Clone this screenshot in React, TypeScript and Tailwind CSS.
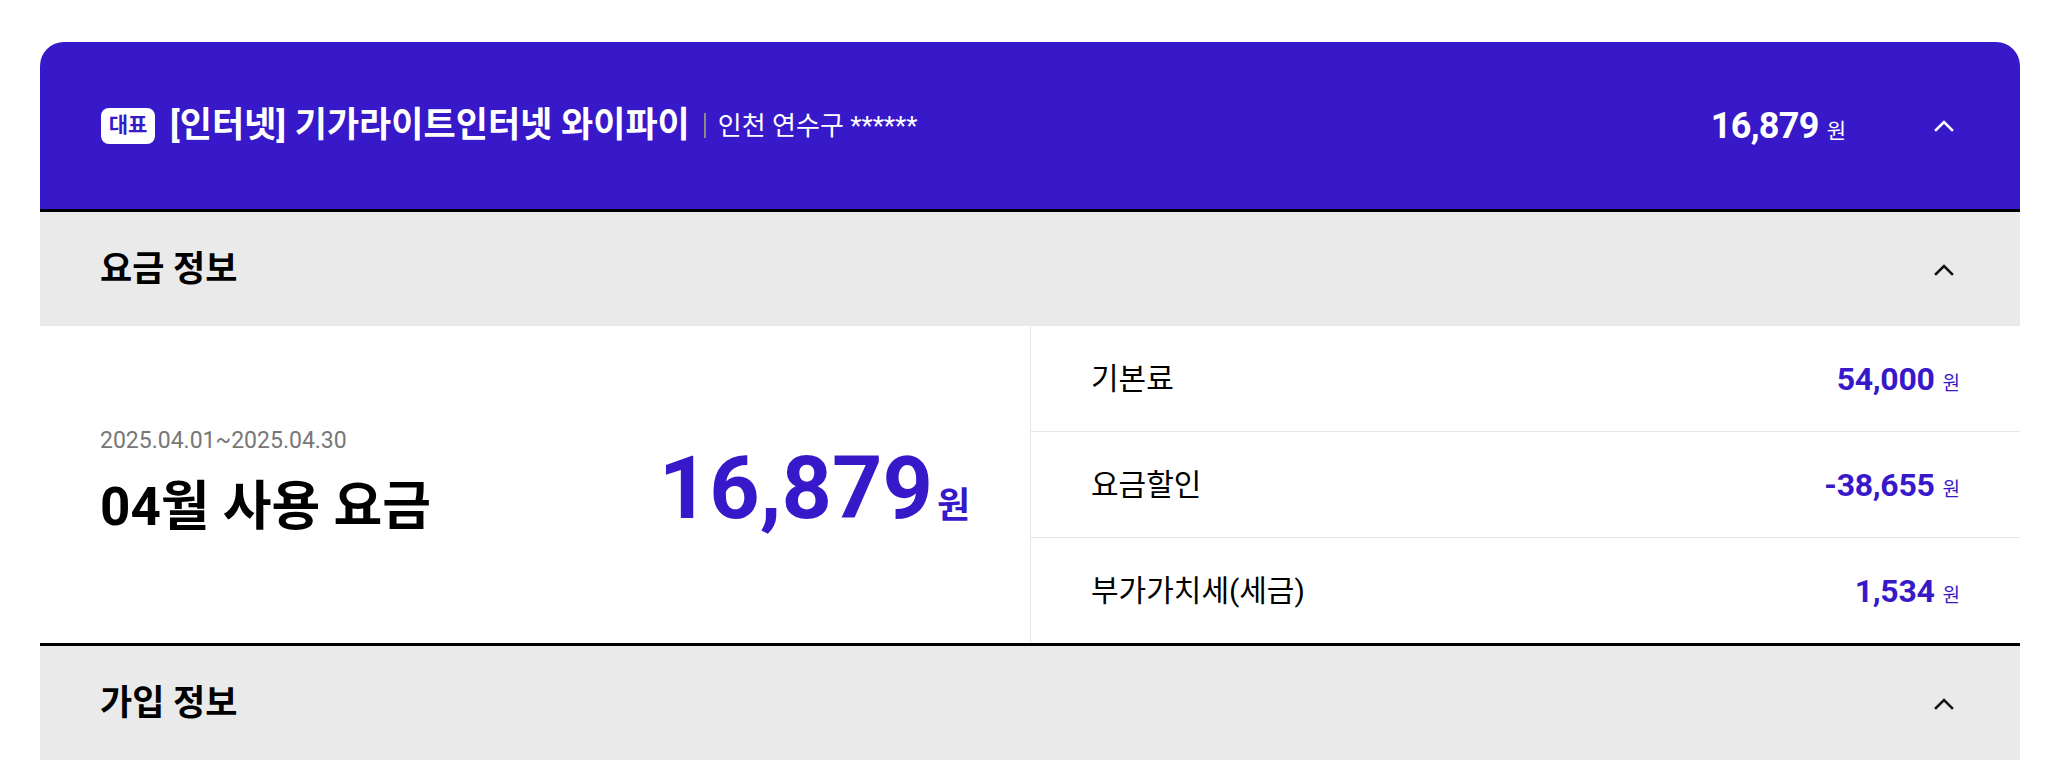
import React from 'react';

const FONT = 'font-[Roboto,"Noto_Sans_CJK_KR",sans-serif]';

const ChevronUp = ({ color }: { color: string }) => (
  <svg width="20" height="13" viewBox="0 0 20 13" fill="none">
    <polyline points="2,11 10,3 18,11" stroke={color} strokeWidth="2.6" strokeLinecap="square" />
  </svg>
);

const rows = [
  { label: '기본료', value: '54,000' },
  { label: '요금할인', value: '-38,655' },
  { label: '부가가치세(세금)', value: '1,534' },
];

const SectionHead = ({ title }: { title: string }) => (
  <div className="h-[114px] bg-[#eaeaea] pl-[60px] pr-[66px] flex items-center justify-between">
    <h3 className="text-[35px] font-bold text-black leading-none">{title}</h3>
    <ChevronUp color="#111" />
  </div>
);

export default function App() {
  return (
    <div className={`${FONT} bg-white min-h-[763px] pt-[42px] pl-[40px]`}>
      <div className="w-[1980px]">
        {/* 상단 요약 */}
        <div className="h-[170px] rounded-t-[24px] bg-[#3719c9] border-b-[3px] border-black pl-[61px] pr-[66px] flex items-center justify-between">
          <div className="flex items-center text-white">
            <span className="w-[54px] h-[36px] rounded-[8px] bg-white text-[#3719c9] text-[21px] font-bold flex items-center justify-center">
              대표
            </span>
            <span className="ml-[15px] text-[35px] font-bold leading-none">
              [인터넷] 기가라이트인터넷 와이파이
            </span>
            <span className="ml-[14px] w-[2px] h-[25px] bg-[#8a8a80]" />
            <span className="ml-[12px] text-[26px] leading-none">인천 연수구 ******</span>
          </div>
          <div className="flex items-center gap-[88px] text-white">
            <div className="flex items-baseline gap-[8px]">
              <span className="text-[36px] font-bold leading-none tracking-[-0.7px]">16,879</span>
              <span className="text-[21px] leading-none">원</span>
            </div>
            <ChevronUp color="#fff" />
          </div>
        </div>

        <SectionHead title="요금 정보" />

        <div className="grid grid-cols-2 h-[320px] border-b-[3px] border-black">
          <div className="px-[60px] flex items-center justify-between">
            <div className="-mt-[8px]">
              <p className="text-[23px] text-[#777] leading-[28px]">2025.04.01~2025.04.30</p>
              <p className="mt-[26px] text-[53px] font-bold text-black leading-none">04월 사용 요금</p>
            </div>
            <div className="flex items-baseline gap-[4px] text-[#3719c9] font-bold mt-[6px]">
              <span className="text-[88px] leading-none">16,879</span>
              <span className="text-[36px] leading-none">원</span>
            </div>
          </div>
          <div className="border-l border-[#e6e6e6] flex flex-col">
            {rows.map((row, i) => (
              <div
                key={row.label}
                className={`flex-1 px-[60px] flex items-center justify-between ${i < rows.length - 1 ? 'border-b border-[#e6e6e6]' : ''}`}
              >
                <span className="text-[30px] text-black leading-none">{row.label}</span>
                <div className="flex items-baseline gap-[8px] text-[#3719c9]">
                  <span className="text-[32px] font-bold leading-none tracking-[-0.3px]">{row.value}</span>
                  <span className="text-[19px] leading-none">원</span>
                </div>
              </div>
            ))}
          </div>
        </div>

        <SectionHead title="가입 정보" />
      </div>
    </div>
  );
}
